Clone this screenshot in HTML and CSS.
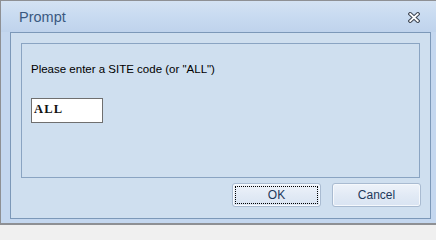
FILE: index.html
```html
<!DOCTYPE html>
<html>
<head>
<meta charset="utf-8">
<link rel="stylesheet" href="styles.css">
</head>
<body>
<div class="window">
  <div class="titlebar">
    <span class="title">Prompt</span>
    <svg class="close" width="12" height="11" viewBox="0 0 12 11">
      <path d="M2.2 2 L9.8 9 M9.8 2 L2.2 9" stroke="#3f4754" stroke-width="3.8" stroke-linecap="square" fill="none"/>
      <path d="M2.2 2 L9.8 9 M9.8 2 L2.2 9" stroke="#ffffff" stroke-width="1.7" stroke-linecap="square" fill="none"/>
    </svg>
  </div>
  <div class="frame">
    <div class="group">
      <div class="label">Please enter a SITE code (or "ALL")</div>
      <div class="input">ALL</div>
    </div>
    <div class="buttons">
      <div class="btn"><span class="focus">OK</span></div>
      <div class="btn"><span class="focus none">Cancel</span></div>
    </div>
  </div>
  <div class="bottom"></div>
</div>
</body>
</html>
```
FILE: styles.css
```css
html, body {
  margin: 0;
  padding: 0;
  background: #f0f0f0;
}
.window {
  width: 436px;
  height: 225px;
  box-sizing: border-box;
  border-top: 1px solid #8e9094;
  border-left: 1px solid #8e9094;
  border-bottom: 2px solid #8e9094;
  background: #c4d7ef;
  display: flex;
  flex-direction: column;
  font-family: "Liberation Sans", Arial, sans-serif;
}
.titlebar {
  height: 31px;
  flex: none;
  display: flex;
  align-items: center;
  justify-content: space-between;
  padding: 0 16px 0 18px;
  background: linear-gradient(#d4e2f3, #c9dbf1 45%, #bfd3ec);
}
.title {
  font-size: 14.5px;
  color: #3a5880;
  margin-top: 1px;
}
.close {
  display: block;
  margin-top: 2px;
}
.frame {
  flex: none;
  height: 187px;
  box-sizing: border-box;
  margin-left: 9px;
  margin-right: 5px;
  border: 1px solid #7c98b8;
  background: #cfdfef;
  display: flex;
  flex-direction: column;
}
.group {
  height: 135px;
  box-sizing: border-box;
  margin: 10px 10px 0 10px;
  border: 1px solid #8aa4c2;
  padding: 18px 0 0 9px;
}
.label {
  font-size: 11.5px;
  color: #000;
  line-height: 14px;
}
.input {
  margin-top: 22px;
  width: 72px;
  height: 25px;
  box-sizing: border-box;
  border: 1px solid #6f6f6f;
  background: #fff;
  font-family: "Liberation Serif", "Times New Roman", serif;
  font-weight: bold;
  font-size: 12.5px;
  letter-spacing: 1.2px;
  line-height: 21px;
  padding-left: 2px;
  color: #111;
}
.buttons {
  display: flex;
  justify-content: flex-end;
  gap: 11px;
  margin: 5px 9px 0 0;
}
.btn {
  width: 89px;
  height: 24px;
  box-sizing: border-box;
  border: 1px solid #a9bbd1;
  border-radius: 3px;
  background: linear-gradient(#eef3fa, #e2eaf5 50%, #d9e4f2);
  box-shadow: inset 0 0 0 1px #f5f8fc;
  padding: 2px;
  display: flex;
}
.focus {
  flex: 1;
  display: flex;
  align-items: center;
  justify-content: center;
  font-size: 12px;
  color: #1e395b;
  border: 1px dotted #000;
}
.focus.none {
  border-color: transparent;
}
.bottom {
  flex: 1;
}
```
